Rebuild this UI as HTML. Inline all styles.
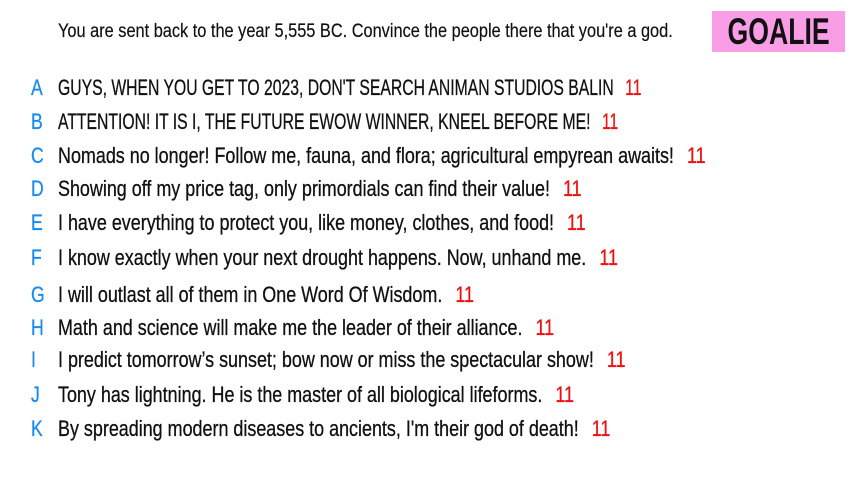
<!DOCTYPE html>
<html><head><meta charset="utf-8"><style>
html,body{margin:0;padding:0;background:#fff;width:853px;height:480px;overflow:hidden;position:relative;font-family:"Liberation Sans Narrow","Liberation Sans",sans-serif;}
.r{position:absolute;left:31px;height:22px;line-height:22px;font-size:22px;white-space:nowrap;color:#111;-webkit-text-stroke:0.3px #111;}
.l{position:absolute;left:0;color:#1a8cf0;-webkit-text-stroke:0.3px #1a8cf0;transform:scaleX(0.8);transform-origin:left center;display:inline-block;}
.t{position:absolute;left:27px;transform:scaleX(0.815);transform-origin:left center;}
.c{transform:scaleX(0.715);}
.n{color:#ee1111;margin-left:16px;-webkit-text-stroke:0.3px #ee1111;}
.title{position:absolute;left:58px;top:21px;font-size:19px;line-height:22px;color:#111;white-space:nowrap;transform:scaleX(0.86);transform-origin:left center;-webkit-text-stroke:0.2px #111;}
.goal{position:absolute;left:712px;top:11px;width:133px;height:41px;background:#f99de6;color:#111;font-size:37px;line-height:41px;text-align:center;font-weight:bold;}
.goal span{display:inline-block;transform:scaleX(0.72) translateX(-6px);}
</style></head><body>
<div class="title">You are sent back to the year 5,555 BC. Convince the people there that you're a god.</div>
<div class="goal"><span>GOALIE</span></div>
<div class="r" style="top:77px"><span class="l">A</span><span class="t c">GUYS, WHEN YOU GET TO 2023, DON'T SEARCH ANIMAN STUDIOS BALIN<span class="n">11</span></span></div>
<div class="r" style="top:111px"><span class="l">B</span><span class="t c">ATTENTION! IT IS I, THE FUTURE EWOW WINNER, KNEEL BEFORE ME!<span class="n">11</span></span></div>
<div class="r" style="top:145px"><span class="l">C</span><span class="t">Nomads no longer! Follow me, fauna, and flora; agricultural empyrean awaits!<span class="n">11</span></span></div>
<div class="r" style="top:178px"><span class="l">D</span><span class="t">Showing off my price tag, only primordials can find their value!<span class="n">11</span></span></div>
<div class="r" style="top:212px"><span class="l">E</span><span class="t">I have everything to protect you, like money, clothes, and food!<span class="n">11</span></span></div>
<div class="r" style="top:247px"><span class="l">F</span><span class="t">I know exactly when your next drought happens. Now, unhand me.<span class="n">11</span></span></div>
<div class="r" style="top:284px"><span class="l">G</span><span class="t">I will outlast all of them in One Word Of Wisdom.<span class="n">11</span></span></div>
<div class="r" style="top:317px"><span class="l">H</span><span class="t">Math and science will make me the leader of their alliance.<span class="n">11</span></span></div>
<div class="r" style="top:349px"><span class="l">I</span><span class="t">I predict tomorrow’s sunset; bow now or miss the spectacular show!<span class="n">11</span></span></div>
<div class="r" style="top:384px"><span class="l">J</span><span class="t">Tony has lightning. He is the master of all biological lifeforms.<span class="n">11</span></span></div>
<div class="r" style="top:418px"><span class="l">K</span><span class="t">By spreading modern diseases to ancients, I'm their god of death!<span class="n">11</span></span></div>
</body></html>
